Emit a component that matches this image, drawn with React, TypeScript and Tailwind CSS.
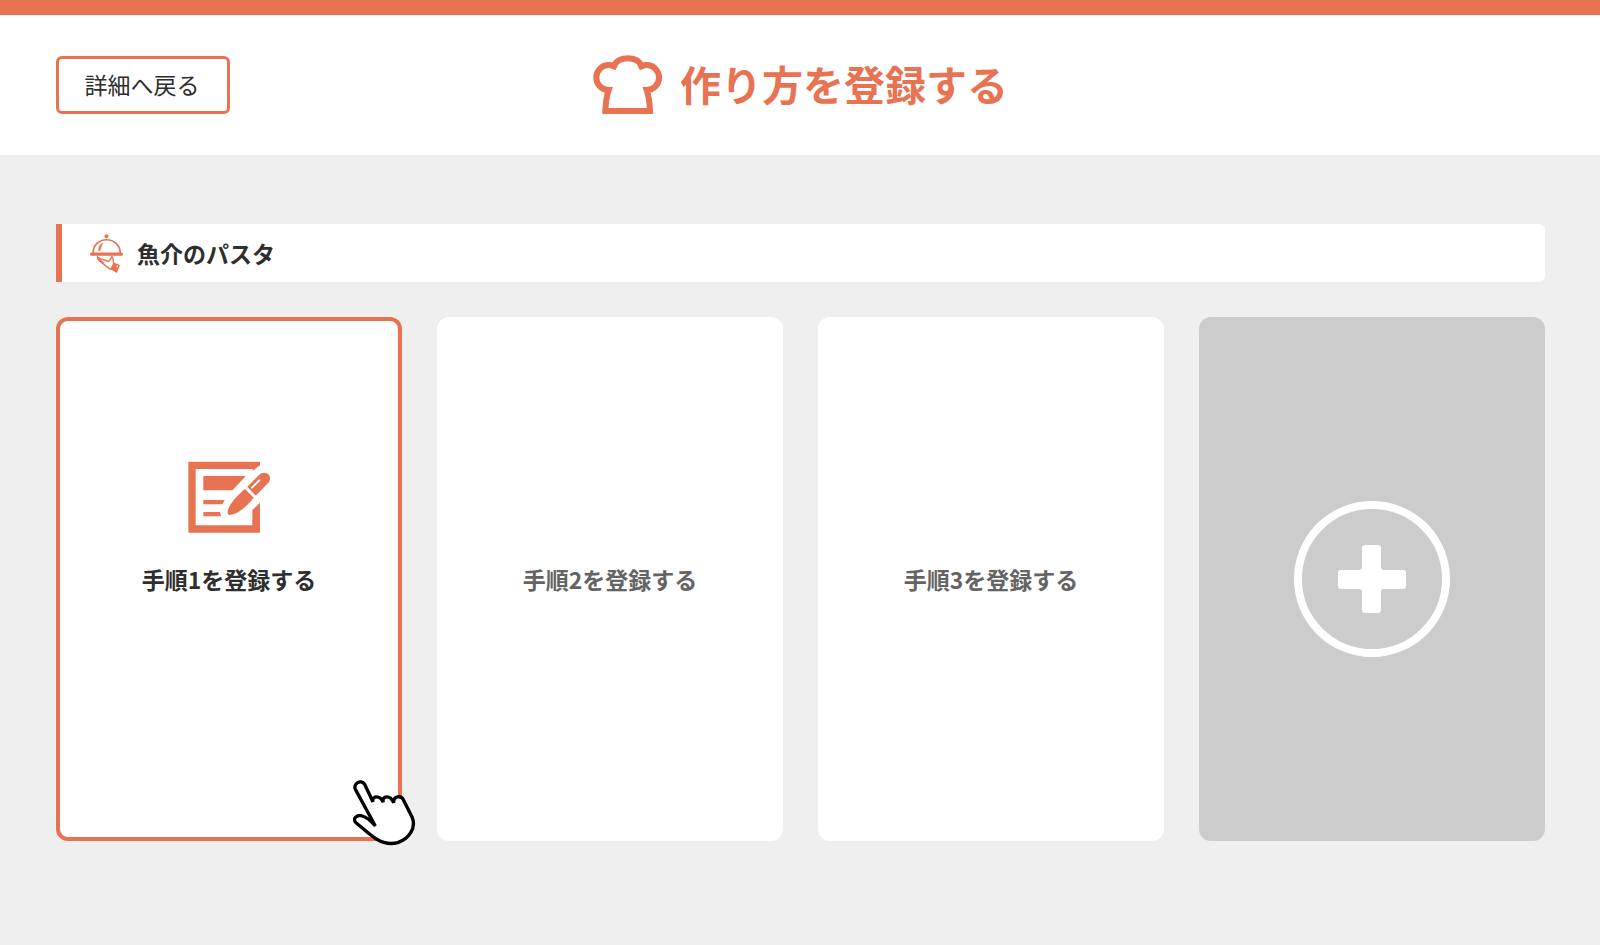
import React from 'react';

interface StepCardProps {
  step: number;
  active?: boolean;
}

function ChefHatIcon() {
  return (
    <svg viewBox="40 44 207 180" className="w-[69px] h-[60px]" fill="none" stroke="#e87352" strokeWidth="18" aria-hidden="true">
      <path d="M77 212H211C210 190 207 166 201 149C222 149 238 132 238 112C238 90 221 74 201 74C196 74 191 75 187 77C179 62 163 54 144 54C125 54 110 62 101 77C97 75 92 74 87 74C67 74 50 90 50 112C50 132 66 149 87 149C81 166 78 190 77 212Z" />
      <path d="M97 70L115 76L107 89Q101 84 92 82ZM191 70L173 76L181 89Q187 84 196 82Z" fill="#e87352" stroke="none" />
    </svg>
  );
}

function ClocheIcon() {
  return (
    <svg viewBox="151 71 98 116" className="w-[33px] h-[39px]" fill="none" stroke="#e87352" aria-hidden="true">
      <circle cx="200" cy="78" r="6" fill="#e87352" stroke="none" />
      <path d="M160 128C160 104 178 88 200 88S241 104 241 128" strokeWidth="5" />
      <path d="M177 120C176 109 181 102 189 98L185 107L181 120Z" fill="#e87352" strokeWidth="2" strokeLinejoin="round" />
      <rect x="151" y="126" width="98" height="10" rx="5" fill="#e87352" stroke="none" />
      <path d="M173 138C172 143 174 147 179 151L205 171C208 173 211 175 214 176M174 139C179 145 188 147 196 149L206 153C211 148 214 144 216 138C220 144 220 150 221 157M178 146L190 156" strokeWidth="4" strokeLinejoin="round" strokeLinecap="round" />
      <path d="M221 156L240 163L231 187L211 176Z" fill="#e87352" stroke="none" />
      <circle cx="232" cy="167" r="2.5" fill="#fff" stroke="none" />
    </svg>
  );
}

function WriteIcon() {
  return (
    <svg viewBox="53 62 249 216" className="w-[83px] h-[72px]" fill="#e87352" aria-hidden="true">
      <path d="M54 64H269V75L247 91V86H76V255H246V209L269 187V277H54Z" />
      <path d="M99 107H224V110L186 150H99Z" />
      <path d="M99 179H163L156 192H99Z" />
      <path d="M99 215H149L152 228H99Z" />
      <path d="M224 146L250 172C232 195 202 223 178 224C172 224 171 219 172 213C176 190 202 164 224 146Z" />
      <path d="M231 139L267 103C274 96 287 95 294 102C301 109 301 119 294 127L256 166Z" />
      <path d="M245 142L267 120" stroke="#fff" strokeWidth="6" strokeLinecap="round" />
    </svg>
  );
}

function PlusIcon() {
  return (
    <svg viewBox="0 0 156 156" className="w-[156px] h-[156px]" fill="none" aria-hidden="true">
      <circle cx="78" cy="78" r="74" stroke="#fff" strokeWidth="8" />
      <path d="M72 44H84Q87 44 87 47V66Q87 69 90 69H109Q112 69 112 72V85Q112 88 109 88H90Q87 88 87 91V109Q87 112 84 112H71Q68 112 68 109V91Q68 88 65 88H47Q44 88 44 85V72Q44 69 47 69H65Q68 69 68 66V47Q68 44 71 44Z" fill="#fff" />
    </svg>
  );
}

function HandIcon() {
  return (
    <svg viewBox="37 60 189 198" className="absolute -right-[18px] -bottom-[9px] w-[63px] h-[66px]" aria-hidden="true">
      <path
        d="M104 198L44 88C37 71 61 56 72 73L97 126C92 106 118 105 128 127C122 106 150 104 159 129C157 106 182 106 188 119L214 171C228 203 205 237 171 248C149 254 127 249 107 237C85 223 64 203 46 188C33 176 50 163 65 168C76 171 92 184 104 198Z"
        fill="#fff"
        stroke="#000"
        strokeWidth="10"
        strokeLinejoin="miter"
      />
    </svg>
  );
}

function StepCard({ step, active = false }: StepCardProps) {
  return (
    <button
      type="button"
      className={`relative grid grid-rows-[1fr_auto_1fr] justify-items-center rounded-xl border-4 bg-white text-[23px] leading-8 font-bold ${
        active ? 'border-[#e87352] text-[#2e2e2e]' : 'border-white text-[#646464]'
      }`}
    >
      <span className="flex items-end pb-[30px]">{active && <WriteIcon />}</span>
      <span>手順{step}を登録する</span>
      {active && <HandIcon />}
    </button>
  );
}

export default function App() {
  return (
    <div className="min-h-screen bg-[#efefef] text-[#2e2e2e] font-['Noto_Sans_CJK_JP',sans-serif]">
      {/* Header */}
      <header className="grid grid-cols-[1fr_auto_1fr] items-center border-t-[15px] border-[#e87352] bg-white pl-14 pr-[55px] py-10">
        <button
          type="button"
          className="h-[58px] w-[174px] justify-self-start rounded-md border-3 border-[#e87352] pr-0.5 pb-0.5 text-[23px] leading-8"
        >
          詳細へ戻る
        </button>
        <h1 className="flex items-center gap-[18px] text-[41px] leading-[56px] font-bold text-[#e87352]">
          <ChefHatIcon />
          <span className="pb-1">作り方を登録する</span>
        </h1>
      </header>

      <main className="pl-14 pr-[55px] py-[69px]">
        {/* Recipe name */}
        <h2 className="flex h-[58px] items-center gap-[14px] rounded-r-md border-l-6 border-[#e87352] bg-white pl-7 text-[23px] leading-8 font-bold">
          <ClocheIcon />
          魚介のパスタ
        </h2>

        {/* Steps */}
        <div className="mt-[35px] grid auto-rows-[524px] grid-cols-4 gap-[35px]">
          <StepCard step={1} active />
          <StepCard step={2} />
          <StepCard step={3} />
          <button type="button" aria-label="手順を追加" className="flex items-center justify-center rounded-xl bg-[#cccccc]">
            <PlusIcon />
          </button>
        </div>
      </main>
    </div>
  );
}
